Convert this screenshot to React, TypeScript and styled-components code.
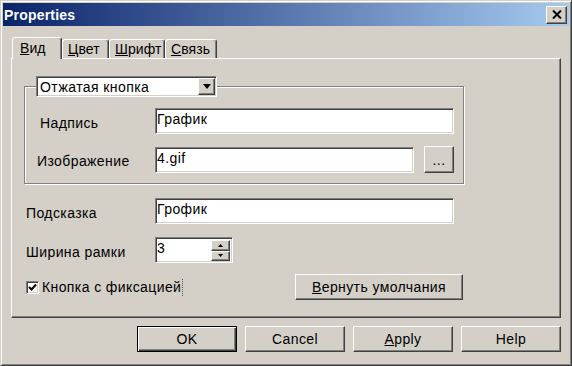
import React from "react"
import styled, { createGlobalStyle, css } from "styled-components"

const GlobalStyle = createGlobalStyle`
  html, body {
    margin: 0;
    padding: 0;
    background: #d4d0c8;
  }
  body {
    font-family: "Liberation Sans", Arial, sans-serif;
    font-size: 14px;
    letter-spacing: 0.4px;
    color: #000;
  }
`

const raised = css`
  border: 1px solid;
  border-color: #fff #404040 #404040 #fff;
  box-shadow: inset -1px -1px 0 #808080;
`

const sunken = css`
  border: 1px solid;
  border-color: #808080 #fff #fff #808080;
  box-shadow: inset 1px 1px 0 #404040, inset -1px -1px 0 #d4d0c8;
`

const Window = styled.div`
  width: 572px;
  height: 366px;
  box-sizing: border-box;
  background: #d4d0c8;
  border: 1px solid;
  border-color: #d4d0c8 #404040 #404040 #d4d0c8;
  box-shadow: inset 1px 1px 0 #fff, inset -1px -1px 0 #808080;
  padding: 2px;
  display: flex;
  flex-direction: column;
`

const TitleBar = styled.div`
  height: 23px;
  display: flex;
  align-items: center;
  justify-content: space-between;
  padding: 0 2px 0 1px;
  background: linear-gradient(to right, #0a246a, #a6caf0);
`

const Title = styled.span`
  color: #fff;
  font-weight: bold;
  font-size: 14px;
  letter-spacing: 0.2px;
`

const CloseButton = styled.div`
  width: 21px;
  height: 18px;
  box-sizing: border-box;
  background: #d4d0c8;
  ${raised};
  display: flex;
  align-items: center;
  justify-content: center;
`

const Body = styled.div`
  padding: 11px 8px 0;
  display: flex;
  flex-direction: column;
`

const TabStrip = styled.div`
  display: flex;
  align-items: flex-end;
  height: 21px;
  padding-left: 1px;
`

const Tab = styled.div<{ $w: number; $active?: boolean }>`
  width: ${(p) => p.$w}px;
  height: 19px;
  box-sizing: border-box;
  padding: 1px 0 0 5px;
  letter-spacing: 0.1px;
  white-space: nowrap;
  border: 1px solid;
  border-bottom: none;
  border-color: #fff #404040 transparent #fff;
  box-shadow: inset -1px 0 0 #808080;
  border-radius: 3px 3px 0 0;
  background: #d4d0c8;
  ${(p) =>
    p.$active &&
    css`
      height: 22px;
      margin-bottom: -1px;
      padding: 2px 0 0 7px;
      position: relative;
      z-index: 1;
    `}
`

const Panel = styled.div`
  height: 260px;
  box-sizing: border-box;
  ${raised};
  padding: 17px 13px 0 12px;
  display: flex;
  flex-direction: column;
`

const Group = styled.fieldset`
  margin: 0;
  width: 440px;
  box-sizing: border-box;
  border: 1px solid #808080;
  box-shadow: 1px 1px 0 #fff, inset 1px 1px 0 #fff;
  padding: 11px 9px 10px 12px;
  display: flex;
  flex-direction: column;
  gap: 12px;
`

const Legend = styled.legend`
  padding: 0;
  margin-left: -1px;
`

const Combo = styled.div`
  width: 181px;
  height: 21px;
  box-sizing: border-box;
  background: #fff;
  ${sunken};
  display: flex;
  align-items: center;
  justify-content: space-between;
  padding: 0 1px 0 3px;
`

const ArrowButton = styled.div<{ $w?: number; $h?: number }>`
  width: ${(p) => p.$w ?? 17}px;
  height: ${(p) => p.$h ?? 17}px;
  box-sizing: border-box;
  background: #d4d0c8;
  ${raised};
  display: flex;
  align-items: center;
  justify-content: center;
`

const Row = styled.div<{ $top?: number }>`
  display: flex;
  align-items: center;
  margin-top: ${(p) => p.$top ?? 0}px;
`

const Label = styled.span<{ $w: number; $indent?: number }>`
  width: ${(p) => p.$w}px;
  padding: 3px 0 0 ${(p) => p.$indent ?? 0}px;
  box-sizing: border-box;
  flex: none;
`

const TextBox = styled.div<{ $w: number }>`
  width: ${(p) => p.$w}px;
  height: 26px;
  box-sizing: border-box;
  background: #fff;
  ${sunken};
  padding: 1px 2px 0 1px;
  line-height: 18px;
  display: flex;
  justify-content: space-between;
`

const SpinButtons = styled.div`
  display: flex;
  flex-direction: column;
  padding: 1px 0;
`

const Button = styled.div<{ $w: number; $h?: number; $default?: boolean }>`
  width: ${(p) => p.$w}px;
  height: ${(p) => p.$h ?? 26}px;
  box-sizing: border-box;
  background: #d4d0c8;
  ${raised};
  display: flex;
  align-items: center;
  justify-content: center;
  flex: none;
  ${(p) =>
    p.$default &&
    css`
      border: 1px solid #000;
      box-shadow: inset 1px 1px 0 #fff, inset -1px -1px 0 #404040,
        inset -2px -2px 0 #808080;
    `}
`

const CheckBlock = styled.label`
  flex: 0 0 271px;
  display: flex;
  align-items: center;
  gap: 3px;
  padding-left: 2px;
  box-sizing: border-box;
`

const CheckBox = styled.span`
  width: 13px;
  height: 13px;
  box-sizing: border-box;
  background: #fff;
  ${sunken};
  display: flex;
  align-items: center;
  justify-content: center;
`

const CheckText = styled.span`
  padding-right: 1px;
  border-right: 1px dotted #555;
  line-height: 17px;
`

const Footer = styled.div`
  margin-top: 8px;
  display: flex;
  justify-content: flex-end;
  gap: 8px;
`

const Down = () => (
  <svg width="8" height="5" viewBox="0 0 8 5">
    <path d="M0 0h8L4 5z" fill="#000" />
  </svg>
)

const SmallUp = () => (
  <svg width="5" height="3" viewBox="0 0 5 3">
    <path d="M0 3h5L2.5 0z" fill="#000" />
  </svg>
)

const SmallDown = () => (
  <svg width="5" height="3" viewBox="0 0 5 3">
    <path d="M0 0h5L2.5 3z" fill="#000" />
  </svg>
)

export default function App() {
  return (
    <>
      <GlobalStyle />
      <Window>
        <TitleBar>
          <Title>Properties</Title>
          <CloseButton>
            <svg width="10" height="9" viewBox="0 0 10 9">
              <path d="M1 0.5l8 8M9 0.5l-8 8" stroke="#000" strokeWidth="2" />
            </svg>
          </CloseButton>
        </TitleBar>
        <Body>
          <TabStrip>
            <Tab $w={50} $active>
              <u>В</u>ид
            </Tab>
            <Tab $w={47}>
              <u>Ц</u>вет
            </Tab>
            <Tab $w={56}>
              <u>Ш</u>рифт
            </Tab>
            <Tab $w={52}>
              <u>С</u>вязь
            </Tab>
          </TabStrip>
          <Panel>
            <Group>
              <Legend>
                <Combo>
                  Отжатая кнопка
                  <ArrowButton>
                    <Down />
                  </ArrowButton>
                </Combo>
              </Legend>
              <Row>
                <Label $w={118} $indent={3}>
                  Надпись
                </Label>
                <TextBox $w={299}>График</TextBox>
              </Row>
              <Row>
                <Label $w={118}>Изображение</Label>
                <TextBox $w={259}>4.gif</TextBox>
                <Button $w={30} $h={27} style={{ marginLeft: 10 }}>
                  ...
                </Button>
              </Row>
            </Group>
            <Row $top={14}>
              <Label $w={131} $indent={2}>
                Подсказка
              </Label>
              <TextBox $w={299}>Грофик</TextBox>
            </Row>
            <Row $top={13}>
              <Label $w={131} $indent={2}>
                Ширина рамки
              </Label>
              <TextBox $w={78}>
                3
                <SpinButtons>
                  <ArrowButton $w={19} $h={11}>
                    <SmallUp />
                  </ArrowButton>
                  <ArrowButton $w={19} $h={11}>
                    <SmallDown />
                  </ArrowButton>
                </SpinButtons>
              </TextBox>
            </Row>
            <Row $top={11}>
              <CheckBlock>
                <CheckBox>
                  <svg width="9" height="8" viewBox="0 0 9 8">
                    <path d="M1 4l2.5 2.5L8 1.5" stroke="#000" strokeWidth="2" fill="none" />
                  </svg>
                </CheckBox>
                <CheckText>Кнопка с фиксацией</CheckText>
              </CheckBlock>
              <Button $w={168}>
                <span>
                  <u>В</u>ернуть умолчания
                </span>
              </Button>
            </Row>
          </Panel>
          <Footer>
            <Button $w={100} $default>
              OK
            </Button>
            <Button $w={100}>Cancel</Button>
            <Button $w={100}>
              <span>
                <u>A</u>pply
              </span>
            </Button>
            <Button $w={100}>Help</Button>
          </Footer>
        </Body>
      </Window>
    </>
  )
}
